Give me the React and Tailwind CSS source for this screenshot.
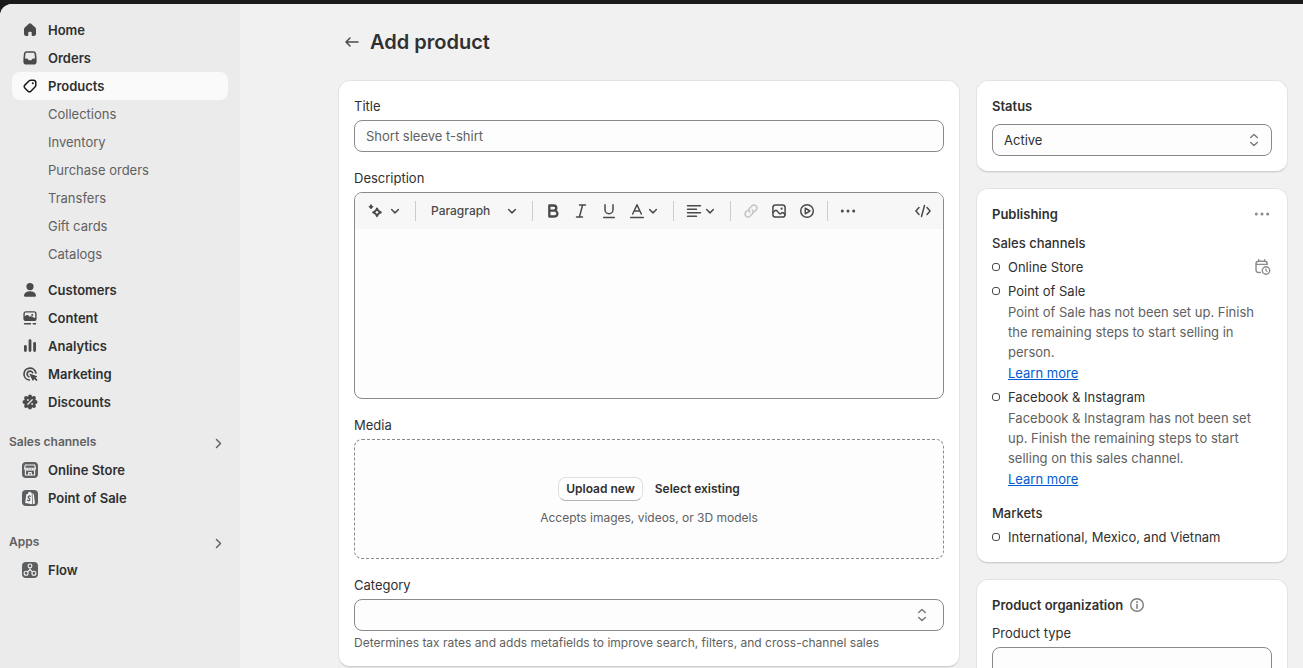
import React, { useState } from "react";
import clsx from "clsx";

/* ---------- icons ---------- */

const Icon = ({ children, className, size = 20 }) => (
  <svg
    viewBox="0 0 20 20"
    width={size}
    height={size}
    fill="none"
    stroke="currentColor"
    strokeWidth="1.5"
    strokeLinecap="round"
    strokeLinejoin="round"
    aria-hidden="true"
    className={clsx("shrink-0", className)}
  >
    {children}
  </svg>
);

const HomeIcon = () => (
  <Icon>
    <path
      fill="currentColor"
      stroke="none"
      d="M8.6 3.9a2 2 0 0 1 2.8 0l3.9 3.5c.5.5.7 1.1.7 1.8v4.500c0 1.300-1 2.300-2.300 2.300h-1.200a.8.8 0 0 1-.8-.8v-2.500a1 1 0 0 0-1-1h-1.400a1 1 0 0 0-1 1v2.500a.8.8 0 0 1-.8.8H6.300A2.300 2.300 0 0 1 4 13.700V9.200c0-.7.3-1.300.8-1.800z"
    />
  </Icon>
);

const OrdersIcon = () => (
  <Icon>
    <path
      fill="currentColor"
      fillRule="evenodd"
      stroke="none"
      d="M6.700 3.200h6.600a2.800 2.800 0 0 1 2.800 2.400l.5 4.900v3.300a2.800 2.800 0 0 1-2.800 2.800H6.200a2.800 2.800 0 0 1-2.800-2.800v-3.300l.5-4.900a2.800 2.800 0 0 1 2.800-2.400zm0 1.500c-.6 0-1.100.4-1.200 1.100L5 10.500h1.700c.5 0 .9.2 1.200.6l.6.800c.2.300.5.400.8.400h1.400c.3 0 .6-.1.800-.4l.6-.8c.3-.4.7-.6 1.200-.6H15l-.5-4.700c-.1-.7-.6-1.100-1.200-1.100z"
    />
  </Icon>
);

const TagIcon = () => (
  <Icon>
    <path d="M10.800 4.200h2.700a2.300 2.300 0 0 1 2.300 2.300v2.700c0 .6-.2 1.100-.6 1.500l-4.300 4.500a2 2 0 0 1-2.900 0l-3.200-3.200a2 2 0 0 1 0-2.900l4.400-4.300c.4-.4 1-.6 1.600-.6z" />
    <circle cx="12.800" cy="7.200" r="1" fill="currentColor" stroke="none" />
  </Icon>
);

const PersonIcon = () => (
  <Icon>
    <g fill="currentColor" stroke="none">
      <circle cx="10" cy="6.600" r="3.600" />
      <path d="M4 15.200c.5-2.500 2.900-4 6-4s5.500 1.500 6 4c.2.900-.5 1.500-1.300 1.500H5.300c-.8 0-1.500-.6-1.300-1.500z" />
    </g>
  </Icon>
);

const ContentIcon = () => (
  <Icon>
    <path
      fill="currentColor"
      fillRule="evenodd"
      stroke="none"
      d="M6 3.200h8a2.600 2.600 0 0 1 2.600 2.600v4.600A2.600 2.600 0 0 1 14 13H6a2.600 2.600 0 0 1-2.600-2.600V5.800A2.600 2.600 0 0 1 6 3.200zm0 1.400c-.7 0-1.200.5-1.200 1.200v2.600l1.400-1.100c.6-.5 1.400-.5 2 0l1.600 1.400.5-.3c.5-.3 1.100-.3 1.600 0l3.300 1.900V5.800c0-.7-.5-1.200-1.200-1.200zm6.200 1.300a1 1 0 1 1 0 2 1 1 0 0 1 0-2z"
    />
    <path d="M4.500 15.700h6M13.200 15.700h2.400" strokeWidth="1.400" />
  </Icon>
);

const BarsIcon = () => (
  <Icon>
    <path d="M5.400 10.300v4.300M10 4.600v10M14.600 7.300v7.300" strokeWidth="2.800" />
  </Icon>
);

const TargetIcon = () => (
  <Icon>
    <path d="M15.900 9A6 6 0 1 0 9.300 16" strokeWidth="1.700" />
    <path d="M12.600 8.700a2.900 2.900 0 1 0-3.700 4" strokeWidth="1.700" />
    <path
      fill="currentColor"
      stroke="none"
      d="M9.900 9.700l6.700 2.200c.6.200.6 1 .1 1.200l-1.200.6 1.600 1.600a.9.9 0 0 1-1.300 1.300l-1.600-1.600-.7 1.300c-.3.500-1 .5-1.200-.1l-2.800-6.200c-.1-.3.100-.5.400-.3z"
    />
  </Icon>
);

const DiscountIcon = () => (
  <Icon>
    <g fill="currentColor" stroke="none">
      <circle cx="10" cy="10" r="5.900" />
      <circle cx="10" cy="4.400" r="1.900" />
      <circle cx="14" cy="6" r="1.900" />
      <circle cx="15.600" cy="10" r="1.900" />
      <circle cx="14" cy="14" r="1.900" />
      <circle cx="10" cy="15.600" r="1.900" />
      <circle cx="6" cy="14" r="1.900" />
      <circle cx="4.400" cy="10" r="1.900" />
      <circle cx="6" cy="6" r="1.900" />
    </g>
    <g className="text-[#ebebeb]">
      <path d="M12.200 7.800l-4.400 4.400" strokeWidth="1.300" />
      <circle cx="7.900" cy="8" r=".9" fill="currentColor" stroke="none" />
      <circle cx="12.100" cy="12" r=".9" fill="currentColor" stroke="none" />
    </g>
  </Icon>
);

const AppTile = ({ children }) => (
  <Icon>
    <rect x="2" y="2" width="16" height="16" rx="4" fill="#5c5f62" stroke="none" />
    <g className="text-[#f4f4f4]" strokeWidth="1.100">
      {children}
    </g>
  </Icon>
);

const StoreIcon = () => (
  <AppTile>
    <path d="M5.500 5h9M5.300 5L4.600 8.300h10.800L14.700 5M5.400 10v5h9.200v-5" />
    <path d="M4.700 8.500c0 2.100 2.600 2.100 2.600.2 0 1.900 2.700 1.900 2.700 0 0 1.900 2.700 1.900 2.700 0 0 1.900 2.600 1.900 2.600-.2" />
    <path d="M8.700 15v-2.400h2.600V15" />
  </AppTile>
);

const PosIcon = () => (
  <AppTile>
    <path
      fill="currentColor"
      stroke="none"
      d="M6.300 6.300l1.500-.4c.4-1.400 1.200-2.200 2.300-2 .6 0 1 .5 1.300 1l.4-.1.300 11.400-6.900-1.300zM12.500 5l1.300 1.200 1.200 9.200-2.200.8z"
    />
    <path
      d="M10.400 8.200c-1-.6-2.200-.1-2.200.9 0 1.200 1.700 1.200 1.600 2.500-.1 1-1.200 1.300-2.200.6"
      stroke="#5c5f62"
      strokeWidth="1.300"
    />
  </AppTile>
);

const FlowIcon = () => (
  <AppTile>
    <circle cx="10" cy="5.900" r="1.900" />
    <circle cx="6.100" cy="13.300" r="2" />
    <circle cx="13.900" cy="13.300" r="2" />
    <path d="M10 7.800v2.400M10 9.500l-2.400 2.300M10 9.500l2.400 2.300" />
  </AppTile>
);

const ChevronRight = () => (
  <Icon>
    <path d="M8.500 7.500l4 4-4 4" />
  </Icon>
);

const ChevronDown = ({ className }) => (
  <Icon size={16} className={className}>
    <path d="M5.800 8.200L10 12.300l4.200-4.100" strokeWidth="1.900" />
  </Icon>
);

const UpDownIcon = ({ className }) => (
  <Icon className={className}>
    <path d="M6.700 7.500L10 4.500l3.300 3M6.700 12.500l3.300 3 3.300-3" />
  </Icon>
);

const ArrowLeft = () => (
  <Icon>
    <path d="M16 10H4M8 6l-4 4 4 4" />
  </Icon>
);

const SparkleIcon = () => (
  <Icon>
    <path d="M12 7.300c.6 2.500 1.500 3.400 4 4-2.500.6-3.400 1.500-4 4-.6-2.500-1.500-3.400-4-4 2.500-.6 3.400-1.500 4-4z" strokeWidth="1.700" />
    <path
      d="M6 4.100c.2 1 .6 1.400 1.600 1.600-1 .2-1.400.6-1.600 1.600-.2-1-.6-1.400-1.600-1.600 1-.2 1.400-.6 1.600-1.600z"
      fill="currentColor"
      strokeWidth="1.500"
    />
  </Icon>
);

const BoldIcon = () => (
  <Icon>
    <path d="M6.300 4.500h4.400a2.600 2.600 0 0 1 0 5.200H6.300zM6.300 9.700h5.200a2.900 2.900 0 0 1 0 5.800H6.300z" strokeWidth="2.300" />
  </Icon>
);

const ItalicIcon = () => (
  <Icon>
    <path d="M8.500 4h6M5.500 16h6M11.600 4l-3.200 12" />
  </Icon>
);

const UnderlineIcon = () => (
  <Icon>
    <path d="M6 3.700v5a4 4 0 0 0 8 0v-5M4.700 16.500h10.600" />
  </Icon>
);

const TextColorIcon = () => (
  <Icon>
    <path d="M5.700 13l4.300-9.200L14.300 13M7.200 10h5.600M3.700 16.500h12.600" />
  </Icon>
);

const AlignIcon = () => (
  <Icon>
    <path d="M3.500 4.700h13M3.500 8.200h9M3.500 11.700h13M3.500 15.300h9" />
  </Icon>
);

const LinkIcon = () => (
  <Icon>
    <path d="M8.800 11.200a3 3 0 0 1 0-4.200l2.300-2.300a3 3 0 0 1 4.200 4.200l-1.500 1.500M11.200 8.800a3 3 0 0 1 0 4.200l-2.300 2.300a3 3 0 0 1-4.200-4.200l1.500-1.500" />
  </Icon>
);

const ImageIcon = () => (
  <Icon>
    <rect x="3.900" y="3.900" width="12.200" height="12.200" rx="2.600" />
    <path d="M4 11.500l2-1.900c.5-.5 1.200-.5 1.700 0l2.600 2.800c.5.5 1.200.6 1.700.1l.7-.6c.5-.4 1.100-.4 1.600 0l1.700 1.500" />
    <circle cx="12.600" cy="7.700" r="1.100" fill="currentColor" stroke="none" />
  </Icon>
);

const PlayIcon = () => (
  <Icon>
    <circle cx="10" cy="10" r="6.300" />
    <path d="M8.300 7.200v5.600l4.600-2.800z" />
  </Icon>
);

const DotsIcon = () => (
  <Icon>
    <g fill="currentColor" stroke="none">
      <circle cx="4.300" cy="10" r="1.500" />
      <circle cx="10" cy="10" r="1.500" />
      <circle cx="15.700" cy="10" r="1.500" />
    </g>
  </Icon>
);

const CodeIcon = () => (
  <Icon>
    <path d="M6 6.500L2.900 10 6 13.500M14 6.500l3.100 3.500-3.100 3.500M11.500 4.500l-3 11" />
  </Icon>
);

const CalendarTimeIcon = () => (
  <Icon>
    <path d="M8.300 15.500H6.500a2.500 2.500 0 0 1-2.500-2.500V6.800a2.500 2.500 0 0 1 2.500-2.500h6.200a2.500 2.500 0 0 1 2.500 2.500v.6H4.200M6.700 2.800v1.500M12.700 2.800v1.500" strokeWidth="1.400" />
    <circle cx="14" cy="13.500" r="3.700" strokeWidth="1.400" />
    <path d="M14 11.900v1.700l1 .8" strokeWidth="1.200" />
  </Icon>
);

const InfoIcon = () => (
  <Icon>
    <circle cx="10" cy="10" r="6.300" strokeWidth="1.400" />
    <path d="M10 9.500v3.800" />
    <circle cx="10" cy="7" r=".9" fill="currentColor" stroke="none" />
  </Icon>
);

/* ---------- data ---------- */

const PRODUCT_LINKS = ["Collections", "Inventory", "Purchase orders", "Transfers", "Gift cards", "Catalogs"];

const SECONDARY_NAV = [
  { label: "Customers", icon: PersonIcon },
  { label: "Content", icon: ContentIcon },
  { label: "Analytics", icon: BarsIcon },
  { label: "Marketing", icon: TargetIcon },
  { label: "Discounts", icon: DiscountIcon },
];

const CHANNELS = [
  { name: "Online Store", scheduled: true },
  {
    name: "Point of Sale",
    note: "Point of Sale has not been set up. Finish the remaining steps to start selling in person.",
  },
  {
    name: "Facebook & Instagram",
    note: "Facebook & Instagram has not been set up. Finish the remaining steps to start selling on this sales channel.",
  },
];

/* ---------- sidebar ---------- */

const NavItem = ({ icon: IconComponent, label, active }) => (
  <a
    href="#"
    aria-current={active ? "page" : undefined}
    className={clsx(
      "flex h-7 items-center gap-2 rounded-lg px-2 font-[570]",
      active ? "bg-[#fafafa]" : "hover:bg-[#f1f1f1]"
    )}
  >
    <span className={active ? "text-[#1a1a1a]" : "text-[#4a4a4a]"}>
      <IconComponent />
    </span>
    {label}
  </a>
);

const SectionButton = ({ label }) => (
  <button type="button" className="-ml-[3px] flex h-7 items-center justify-between text-[12px] font-semibold text-[#616161]">
    {label}
    <ChevronRight />
  </button>
);

const Sidebar = () => (
  <nav className="flex w-60 shrink-0 flex-col bg-[#ebebeb] px-3 pt-3 text-[#303030]">
    <NavItem icon={HomeIcon} label="Home" />
    <NavItem icon={OrdersIcon} label="Orders" />
    <NavItem icon={TagIcon} label="Products" active />
    {PRODUCT_LINKS.map((label) => (
      <a key={label} href="#" className="flex h-7 items-center rounded-lg pl-9 text-[#616161] hover:bg-[#f1f1f1]">
        {label}
      </a>
    ))}
    <div className="mt-2 flex flex-col">
      {SECONDARY_NAV.map((item) => (
        <NavItem key={item.label} {...item} />
      ))}
    </div>
    <div className="mt-3 flex flex-col">
      <SectionButton label="Sales channels" />
      <NavItem icon={StoreIcon} label="Online Store" />
      <NavItem icon={PosIcon} label="Point of Sale" />
    </div>
    <div className="mt-4 flex flex-col">
      <SectionButton label="Apps" />
      <NavItem icon={FlowIcon} label="Flow" />
    </div>
  </nav>
);

/* ---------- form pieces ---------- */

const Card = ({ children, className }) => (
  <section
    className={clsx(
      "flex flex-col rounded-xl border border-[#e3e3e3] border-b-[#cfcfcf] bg-white p-[15px] shadow-[0_1px_0_rgba(0,0,0,0.05)]",
      className
    )}
  >
    {children}
  </section>
);

const SelectBox = ({ id, value, onChange, options, label, iconClassName = "right-2" }) => (
  <div className="relative">
    <select
      id={id}
      aria-label={label}
      value={value}
      onChange={(e) => onChange(e.target.value)}
      className="block h-8 w-full appearance-none rounded-lg border border-[#8a8a8a] bg-[#fdfdfd] pr-8 pl-[11px]"
    >
      {options.map((opt) => (
        <option key={opt} value={opt}>{opt}</option>
      ))}
    </select>
    <UpDownIcon className={clsx("pointer-events-none absolute top-1.5 text-[#7a7a7a]", iconClassName)} />
  </div>
);

const ToolButton = ({ label, menu, disabled, children }) => (
  <button
    type="button"
    aria-label={label}
    title={label}
    disabled={disabled}
    className={clsx(
      "flex h-7 min-w-7 items-center rounded-md enabled:hover:bg-[#ebebeb] disabled:text-[#c4c4c4]",
      menu ? "pr-1.5 pl-1" : "justify-center"
    )}
  >
    {children}
    {menu && <ChevronDown className="-ml-0.5" />}
  </button>
);

const Divider = () => <span className="mx-1.5 h-5 w-px shrink-0 bg-[#cccccc]" />;

const Toolbar = () => {
  const [block, setBlock] = useState("Paragraph");

  return (
    <div className="flex h-9 items-center bg-[#f7f7f7] px-1.5 text-[#4a4a4a]">
      <ToolButton label="Generate text" menu>
        <span className="mr-1"><SparkleIcon /></span>
      </ToolButton>
      <Divider />
      <div className="relative ml-1">
        <select
          aria-label="Formatting"
          value={block}
          onChange={(e) => setBlock(e.target.value)}
          className="h-7 w-[100px] appearance-none bg-transparent pl-[5px] text-[12px] font-[550]"
        >
          <option>Paragraph</option>
          <option>Heading 1</option>
          <option>Heading 2</option>
          <option>Blockquote</option>
        </select>
        <ChevronDown className="pointer-events-none absolute top-1.5 right-1.5" />
      </div>
      <Divider />
      <ToolButton label="Bold"><BoldIcon /></ToolButton>
      <ToolButton label="Italic"><ItalicIcon /></ToolButton>
      <ToolButton label="Underline"><UnderlineIcon /></ToolButton>
      <ToolButton label="Text color" menu><TextColorIcon /></ToolButton>
      <Divider />
      <ToolButton label="Alignment" menu><AlignIcon /></ToolButton>
      <Divider />
      <ToolButton label="Insert link" disabled><LinkIcon /></ToolButton>
      <ToolButton label="Insert image"><ImageIcon /></ToolButton>
      <ToolButton label="Insert video"><PlayIcon /></ToolButton>
      <Divider />
      <ToolButton label="More"><DotsIcon /></ToolButton>
      <span className="grow" />
      <ToolButton label="Show HTML"><CodeIcon /></ToolButton>
    </div>
  );
};

const ProductForm = () => {
  const [title, setTitle] = useState("");
  const [description, setDescription] = useState("");
  const [category, setCategory] = useState("");

  return (
    <Card className="gap-4">
      <div className="flex flex-col gap-1">
        <label htmlFor="title">Title</label>
        <input
          id="title"
          type="text"
          value={title}
          onChange={(e) => setTitle(e.target.value)}
          placeholder="Short sleeve t-shirt"
          className="h-8 w-full rounded-lg border border-[#8a8a8a] bg-[#fdfdfd] px-[11px] placeholder:text-[#616161]"
        />
      </div>

      <div className="flex flex-col gap-1">
        <label htmlFor="description">Description</label>
        <div className="flex flex-col overflow-hidden rounded-lg border border-[#8a8a8a] bg-[#fdfdfd]">
          <Toolbar />
          <textarea
            id="description"
            value={description}
            onChange={(e) => setDescription(e.target.value)}
            className="h-[169px] resize-none p-3 outline-none"
          />
        </div>
      </div>

      <div className="flex flex-col gap-1">
        <h2>Media</h2>
        <div className="flex h-[120px] flex-col items-center justify-center gap-[7px] rounded-lg border border-dashed border-[#8a8a8a] bg-[#fdfdfd] pt-[7px] text-[12px]">
          <div className="flex items-center gap-3 font-[570]">
            <button
              type="button"
              className="h-6 rounded-lg border border-[#e0e0e0] border-b-[#b5b5b5] bg-white px-[7px]"
            >
              Upload new
            </button>
            <button type="button" className="h-6">
              Select existing
            </button>
          </div>
          <p className="text-[#616161]">Accepts images, videos, or 3D models</p>
        </div>
      </div>

      <div className="flex flex-col gap-1">
        <label htmlFor="category">Category</label>
        <SelectBox
          id="category"
          value={category}
          onChange={setCategory}
          options={["", "Apparel & Accessories", "Electronics", "Home & Garden"]}
          iconClassName="right-3"
        />
        <p className="text-[12px] leading-4 text-[#616161]">
          Determines tax rates and adds metafields to improve search, filters, and cross-channel sales
        </p>
      </div>
    </Card>
  );
};

const Marker = () => (
  <span className="flex h-5 shrink-0 items-center">
    <span className="h-2 w-2 rounded-[3px] border border-[#4a4a4a]" />
  </span>
);

const StatusCard = () => {
  const [status, setStatus] = useState("Active");

  return (
    <Card className="gap-2">
      <h2 className="font-[630]">Status</h2>
      <SelectBox label="Status" value={status} onChange={setStatus} options={["Active", "Draft"]} />
    </Card>
  );
};

const PublishingCard = () => (
  <Card>
    <div className="mb-[9px] flex h-5 items-center justify-between">
      <h2 className="font-[630]">Publishing</h2>
      <button type="button" aria-label="Manage publishing" className="text-[#8a8a8a]">
        <DotsIcon />
      </button>
    </div>
    <h3 className="mb-1 font-[550]">Sales channels</h3>
    <ul className="flex flex-col gap-1">
      {CHANNELS.map(({ name, note, scheduled }) => (
        <li key={name} className="flex gap-2">
          <Marker />
          <div className="flex min-w-0 grow flex-col items-start gap-px">
            <span>{name}</span>
            {note && <p className="text-[#616161]">{note}</p>}
            {note && <a href="#" className="text-[#005bd3] underline">Learn more</a>}
          </div>
          {scheduled && (
            <button type="button" aria-label="Schedule availability" className="h-5 text-[#8a8a8a]">
              <CalendarTimeIcon />
            </button>
          )}
        </li>
      ))}
    </ul>
    <h3 className="mt-[14px] mb-1 font-[550]">Markets</h3>
    <div className="flex gap-2">
      <Marker />
      <span>International, Mexico, and Vietnam</span>
    </div>
  </Card>
);

const OrganizationCard = () => (
  <Card className="gap-2">
    <div className="flex h-5 items-center gap-1">
      <h2 className="font-[630]">Product organization</h2>
      <button type="button" aria-label="About product organization" className="text-[#7a7a7a]">
        <InfoIcon />
      </button>
    </div>
    <div className="flex flex-col gap-1">
      <label htmlFor="product-type">Product type</label>
      <input
        id="product-type"
        type="text"
        className="h-8 w-full rounded-lg border border-[#8a8a8a] bg-[#fdfdfd] px-[11px]"
      />
    </div>
  </Card>
);

export default function App() {
  return (
    <div className="flex h-screen flex-col bg-[#1a1a1a] pt-1 font-['Inter',sans-serif] text-[13px] leading-5 font-[430] text-[#303030]">
      <div className="flex min-h-0 grow overflow-hidden rounded-tl-xl bg-[#f1f1f1]">
        <Sidebar />
        <main className="min-w-0 grow overflow-y-auto pt-6 pr-[15px] pb-4 pl-[98px] [scrollbar-width:none]">
          <header className="mb-6 flex h-7 items-center gap-2 pl-1">
            <a href="#" aria-label="Back to products" className="text-[#4a4a4a]">
              <ArrowLeft />
            </a>
            <h1 className="text-[20px] leading-6 font-semibold">Add product</h1>
          </header>
          <div className="grid grid-cols-[minmax(0,311fr)_minmax(0,156fr)] items-start gap-4">
            <ProductForm />
            <div className="flex flex-col gap-4">
              <StatusCard />
              <PublishingCard />
              <OrganizationCard />
            </div>
          </div>
        </main>
      </div>
    </div>
  );
}
